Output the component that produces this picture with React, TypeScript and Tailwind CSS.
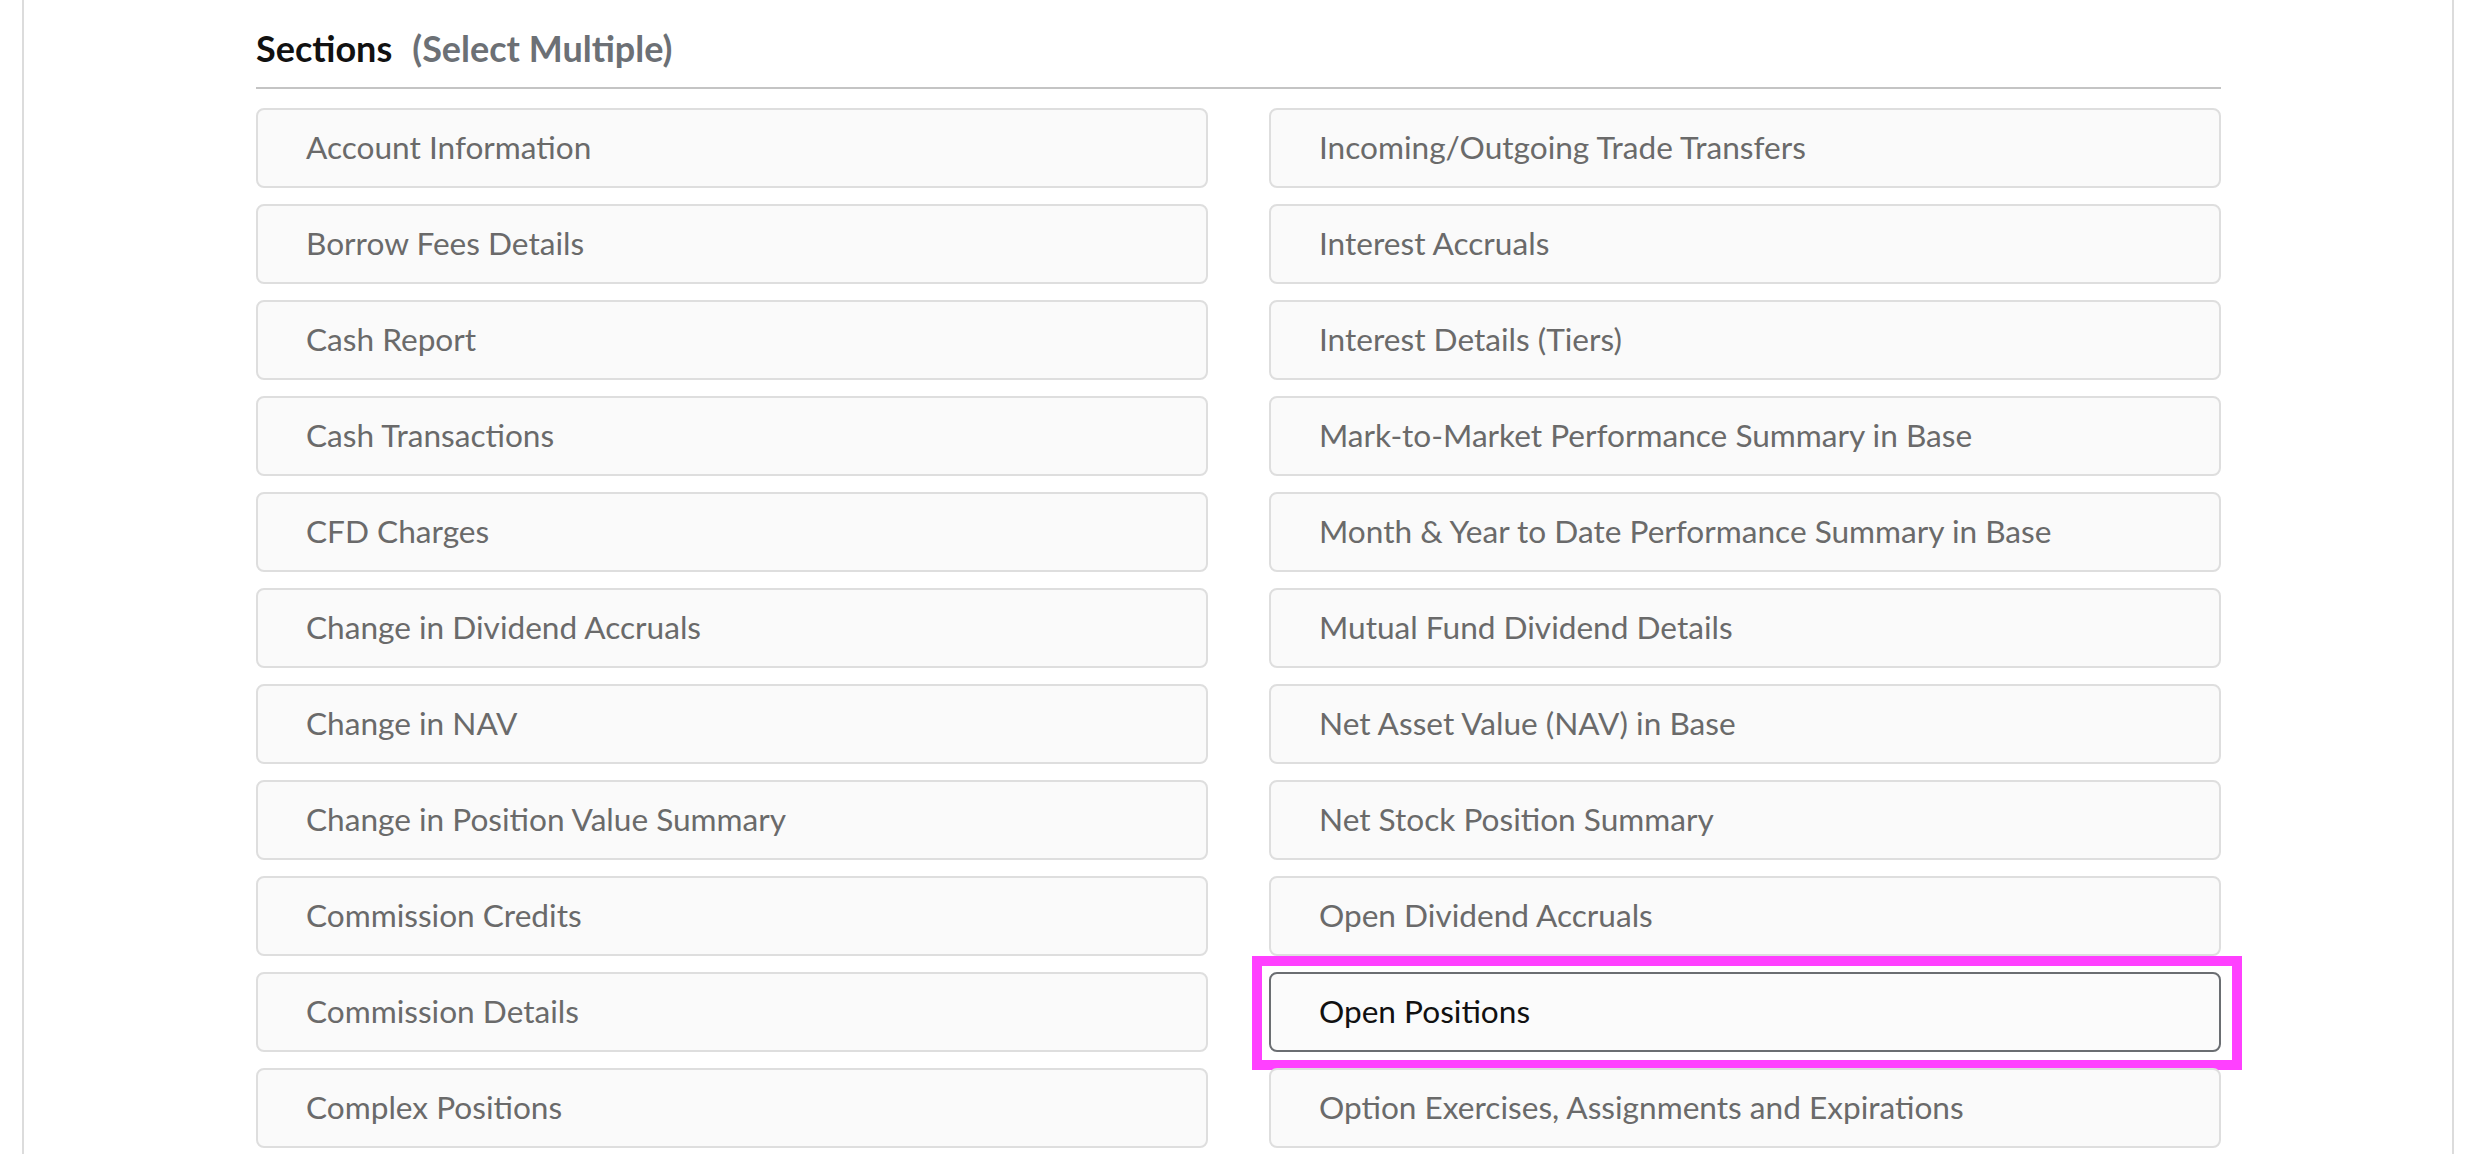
import React from "react";

const LEFT = [
  "Account Information",
  "Borrow Fees Details",
  "Cash Report",
  "Cash Transactions",
  "CFD Charges",
  "Change in Dividend Accruals",
  "Change in NAV",
  "Change in Position Value Summary",
  "Commission Credits",
  "Commission Details",
  "Complex Positions",
];

const RIGHT = [
  "Incoming/Outgoing Trade Transfers",
  "Interest Accruals",
  "Interest Details (Tiers)",
  "Mark-to-Market Performance Summary in Base",
  "Month & Year to Date Performance Summary in Base",
  "Mutual Fund Dividend Details",
  "Net Asset Value (NAV) in Base",
  "Net Stock Position Summary",
  "Open Dividend Accruals",
  "Open Positions",
  "Option Exercises, Assignments and Expirations",
];

function Option({ label, selected }: { label: string; selected?: boolean }) {
  return (
    <div className="relative">
      <button
        type="button"
        className={
          selected
            ? "flex h-[80px] w-full items-center rounded-[8px] border-2 border-[#6b6e72] bg-[#fbfbfb] pl-[48px] text-left text-[31.6px] text-[#111111]"
            : "flex h-[80px] w-full items-center rounded-[8px] border-2 border-[#dedede] bg-[#fafafa] pl-[48px] text-left text-[31.6px] text-[#6a6a6a]"
        }
      >
        {label}
      </button>
      {selected && (
        <div className="pointer-events-none absolute -left-[17px] -right-[21px] -top-[16px] -bottom-[18px] border-[10px] border-[#ff40ff]" />
      )}
    </div>
  );
}

export default function App() {
  const rows = LEFT.map((l, i) => [l, RIGHT[i]]);
  return (
    <div
      className="h-[1154px] w-[2478px] overflow-hidden bg-white"
      style={{ fontFamily: "Lato, 'Open Sans', sans-serif" }}
    >
      <div className="ml-[22px] h-full w-[2432px] border-x-2 border-[#dcdcdc] pl-[232px] pr-[231px]">
        <div className="flex h-[89px] items-end border-b-2 border-[#c4c4c4] pb-[21px]">
          <h2 className="text-[36px] font-bold leading-none text-[#111111]">
            Sections
            <span className="ml-[20px] font-bold text-[#6c7075]">(Select Multiple)</span>
          </h2>
        </div>
        <div className="mt-[19px] grid grid-cols-2 gap-x-[61px] gap-y-[16px]">
          {rows.map(([l, r]) => (
            <React.Fragment key={l}>
              <Option label={l} />
              <Option label={r} selected={r === "Open Positions"} />
            </React.Fragment>
          ))}
        </div>
      </div>
    </div>
  );
}
